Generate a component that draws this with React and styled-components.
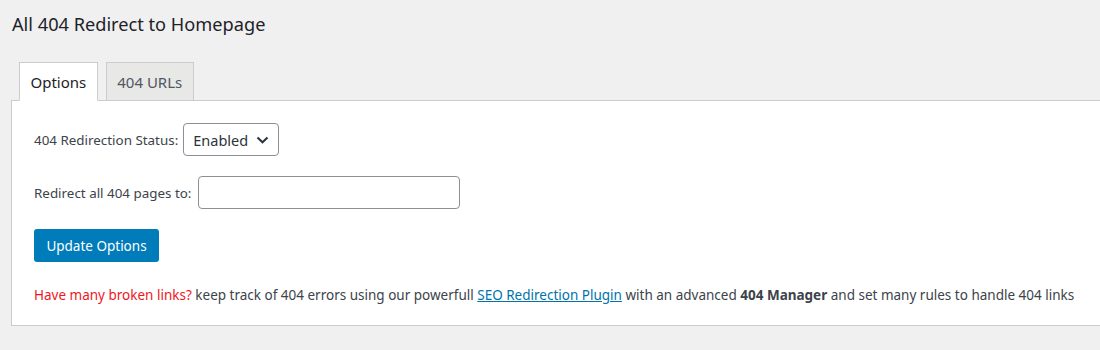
import React from 'react';
import styled, { createGlobalStyle } from 'styled-components';

const GlobalStyle = createGlobalStyle`
  html, body {
    margin: 0;
    padding: 0;
    background: #f0f0f1;
    overflow: hidden;
  }
  body {
    font-family: "Noto Sans", "Open Sans", sans-serif;
    color: #3c434a;
    font-size: 13.4px;
  }
`;

const Wrap = styled.div`
  width: 1100px;
  height: 350px;
  padding: 0 0 0 11px;
  box-sizing: border-box;
`;

const Title = styled.h1`
  margin: 0;
  padding: 12px 0 0 1px;
  height: 50px;
  box-sizing: border-box;
  font-size: 18.2px;
  font-weight: 400;
  line-height: 24px;
  color: #1d2327;
`;

const TabBar = styled.div`
  display: flex;
  gap: 8px;
  padding-left: 8px;
  margin-top: 12px;
  position: relative;
  z-index: 1;
`;

const Tab = styled.div`
  height: 39px;
  box-sizing: border-box;
  padding: 1px 10.5px 0;
  display: flex;
  align-items: center;
  font-size: 15px;
  color: ${p => (p.$active ? '#1d2327' : '#50575e')};
  background: ${p => (p.$active ? '#fff' : '#e8e8e7')};
  border: 1px solid #ccc;
  border-bottom-color: ${p => (p.$active ? '#fff' : '#ccc')};
`;

const Panel = styled.div`
  margin-top: -1px;
  width: 1120px;
  height: 226px;
  box-sizing: border-box;
  background: #fff;
  border: 1px solid #ccc;
  padding: 22px 0 0 22px;
  display: flex;
  flex-direction: column;
  gap: 20px;
`;

const Row = styled.div`
  display: flex;
  align-items: center;
  gap: ${p => p.$gap || 5}px;
  height: 33px;
`;

const Label = styled.span`
  font-size: 13.4px;
  color: #3c434a;
`;

const Select = styled.div`
  width: 96px;
  height: 33px;
  box-sizing: border-box;
  border: 1px solid #8c8f94;
  border-radius: 4px;
  display: flex;
  align-items: center;
  justify-content: space-between;
  padding: 0 9px 0 9px;
  font-size: 14.5px;
  color: #2c3338;
`;

const TextInput = styled.div`
  width: 262px;
  height: 33px;
  box-sizing: border-box;
  border: 1px solid #8c8f94;
  border-radius: 4px;
  background: #fff;
`;

const Button = styled.div`
  width: 125px;
  height: 33px;
  box-sizing: border-box;
  background: #007cba;
  border-radius: 3px;
  color: #fff;
  font-size: 13.5px;
  display: flex;
  align-items: center;
  justify-content: center;
`;

const Note = styled.p`
  margin: 4px 0 0;
  font-size: 13.5px;
  color: #3c434a;
  white-space: nowrap;
`;

const Alert = styled.span`
  color: #f0161e;
`;

const Link = styled.a`
  color: #0073aa;
  text-decoration: underline;
`;

const Chevron = () => (
  <svg width="13" height="8" viewBox="0 0 13 8">
    <path d="M1.5 1.5 L6.5 6.3 L11.5 1.5" fill="none" stroke="#2c3338" strokeWidth="2" />
  </svg>
);

export default function App() {
  return (
    <>
      <GlobalStyle />
      <Wrap>
        <Title>All 404 Redirect to Homepage</Title>
        <TabBar>
          <Tab $active>Options</Tab>
          <Tab>404 URLs</Tab>
        </TabBar>
        <Panel>
          <Row>
            <Label>404 Redirection Status:</Label>
            <Select>
              <span>Enabled</span>
              <Chevron />
            </Select>
          </Row>
          <Row $gap={7}>
            <Label>Redirect all 404 pages to:</Label>
            <TextInput />
          </Row>
          <Row>
            <Button>Update Options</Button>
          </Row>
          <Note>
            <Alert>Have many broken links?</Alert> keep track of 404 errors using our powerfull{' '}
            <Link href="#">SEO Redirection Plugin</Link> with an advanced <b>404 Manager</b> and set
            many rules to handle 404 links
          </Note>
        </Panel>
      </Wrap>
    </>
  );
}
